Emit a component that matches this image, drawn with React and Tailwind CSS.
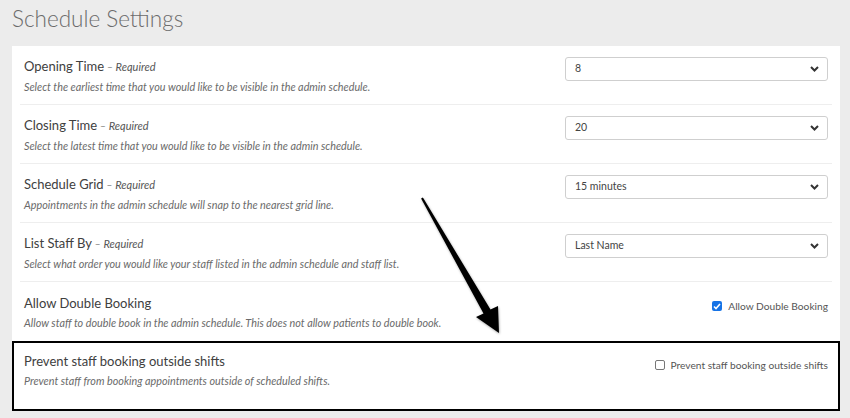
import React from "react";

const rows = [
  {
    title: "Opening Time",
    required: true,
    description: "Select the earliest time that you would like to be visible in the admin schedule.",
    value: "8",
  },
  {
    title: "Closing Time",
    required: true,
    description: "Select the latest time that you would like to be visible in the admin schedule.",
    value: "20",
  },
  {
    title: "Schedule Grid",
    required: true,
    description: "Appointments in the admin schedule will snap to the nearest grid line.",
    value: "15 minutes",
  },
  {
    title: "List Staff By",
    required: true,
    description: "Select what order you would like your staff listed in the admin schedule and staff list.",
    value: "Last Name",
  },
];

function SelectBox({ value }) {
  return (
    <div className="w-[263px] h-[24px] border border-[#cfcfcf] rounded-[3px] bg-white flex items-center justify-between pl-[9px] pr-[8px] text-[10.5px] text-[#444]">
      <span>{value}</span>
      <svg width="9" height="6" viewBox="0 0 9 6">
        <path d="M1 1l3.5 3.5L8 1" fill="none" stroke="#333" strokeWidth="2" />
      </svg>
    </div>
  );
}

function Checkbox({ checked }) {
  if (checked) {
    return (
      <span className="block w-[10px] h-[10px] rounded-[2px] bg-[#1673e6] flex items-center justify-center">
        <svg width="8" height="7" viewBox="0 0 8 7">
          <path d="M1 3.5l2 2L7 1" fill="none" stroke="white" strokeWidth="1.6" />
        </svg>
      </span>
    );
  }
  return <span className="block w-[10px] h-[10px] rounded-[2px] border border-[#777] bg-white"></span>;
}

function Label({ title, required, description }) {
  return (
    <div>
      <div className="text-[13px] leading-[18px] text-[#404040]">
        {title}
        {required && <span className="italic text-[11px] text-[#555]"> – Required</span>}
      </div>
      <div className="mt-1 text-[10.8px] leading-[14px] italic text-[#6a6a6a]">{description}</div>
    </div>
  );
}

export default function App() {
  return (
    <div className="relative w-[850px] h-[418px] bg-[#ececec] overflow-hidden" style={{ fontFamily: "Lato, 'Liberation Sans', sans-serif" }}>
      <h1 className="pl-3 pt-[4px] h-[46px] text-[22.5px] leading-[30px] font-light text-[#6b6b6b]">Schedule Settings</h1>

      <div className="ml-3 w-[828px] bg-white px-2">
        {rows.map((row) => (
          <div key={row.title} className="h-[59px] px-1 pt-[11px] border-b border-[#eeeeee] flex justify-between">
            <Label {...row} />
            <SelectBox value={row.value} />
          </div>
        ))}

        <div className="h-[59px] px-1 pt-3 flex justify-between">
          <Label
            title="Allow Double Booking"
            description="Allow staff to double book in the admin schedule. This does not allow patients to double book."
          />
          <div className="flex items-start gap-[6px] pt-[6px] text-[10.2px] text-[#555]">
            <span className="pt-[1px]"><Checkbox checked /></span>
            <span className="leading-[12px]">Allow Double Booking</span>
          </div>
        </div>

        <div className="-mx-2 h-[70px] border-2 border-black px-[10px] pt-[9px] flex justify-between">
          <Label
            title="Prevent staff booking outside shifts"
            description="Prevent staff from booking appointments outside of scheduled shifts."
          />
          <div className="flex items-start gap-[6px] pt-[7px] text-[10.2px] text-[#555]">
            <span className="pt-[1px]"><Checkbox /></span>
            <span className="leading-[12px]">Prevent staff booking outside shifts</span>
          </div>
        </div>
      </div>

      <svg className="absolute left-0 top-0 pointer-events-none" width="850" height="418" viewBox="0 0 850 418">
        <defs>
          <filter id="sh" x="-20%" y="-20%" width="140%" height="140%">
            <feDropShadow dx="0.5" dy="1" stdDeviation="1" floodColor="#000" floodOpacity="0.35" />
          </filter>
        </defs>
        <polygon
          filter="url(#sh)"
          fill="#000"
          points="422.9,197.5 490.5,309.5 498,306 499,333 476,317 483.5,313.5 421.1,198.5"
        />
      </svg>
    </div>
  );
}
